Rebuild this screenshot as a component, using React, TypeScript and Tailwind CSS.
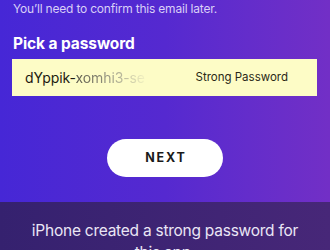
export default function App() {
  return (
    <div
      className="w-[330px] h-[250px] overflow-hidden flex flex-col bg-gradient-to-r from-[#4627d6] via-[#5529d0] to-[#722fc6]"
      style={{ fontFamily: "Inter, 'Noto Sans', sans-serif" }}
    >
      <div className="shrink-0 flex flex-col px-[12px] h-[202px]">
        <p className="pl-[1px] pt-[2px] text-[12px] leading-[14px] tracking-[-0.2px] text-[#d9cff7]">
          You’ll need to confirm this email later.
        </p>
        <h2 className="mt-[18px] pl-[1px] text-[15.5px] leading-[19px] font-bold text-white tracking-[-0.1px]">
          Pick a password
        </h2>
        <div className="mt-[6px] w-[305px] h-[37px] bg-[#fdfcc6] flex items-center justify-between pl-[13px] pr-[29px]">
          <span className="text-[14px] tracking-[-0.1px] text-[#1c1a10]">
            dYppik-
            <span className="bg-gradient-to-r from-[#5a584a] via-[#9d9c88] to-[#f3f2c2] bg-clip-text text-transparent">
              xomhi3-se
            </span>
          </span>
          <span className="text-[11.5px] text-[#2a2818]">Strong Password</span>
        </div>
        <div className="flex justify-center mt-[43px]">
          <button className="w-[116px] h-[38px] rounded-full bg-white text-[12.5px] font-bold tracking-[1.8px] text-[#1a1a1a] pl-[2px]">
            NEXT
          </button>
        </div>
      </div>
      <div className="flex-1 bg-gradient-to-r from-[#35216f] to-[#472778] flex justify-center pt-[18px]">
        <p className="text-center text-[15.5px] leading-[22px] tracking-[-0.25px] text-[#eae6f5] w-[272px]">
          iPhone created a strong password for this app.
        </p>
      </div>
    </div>
  );
}
